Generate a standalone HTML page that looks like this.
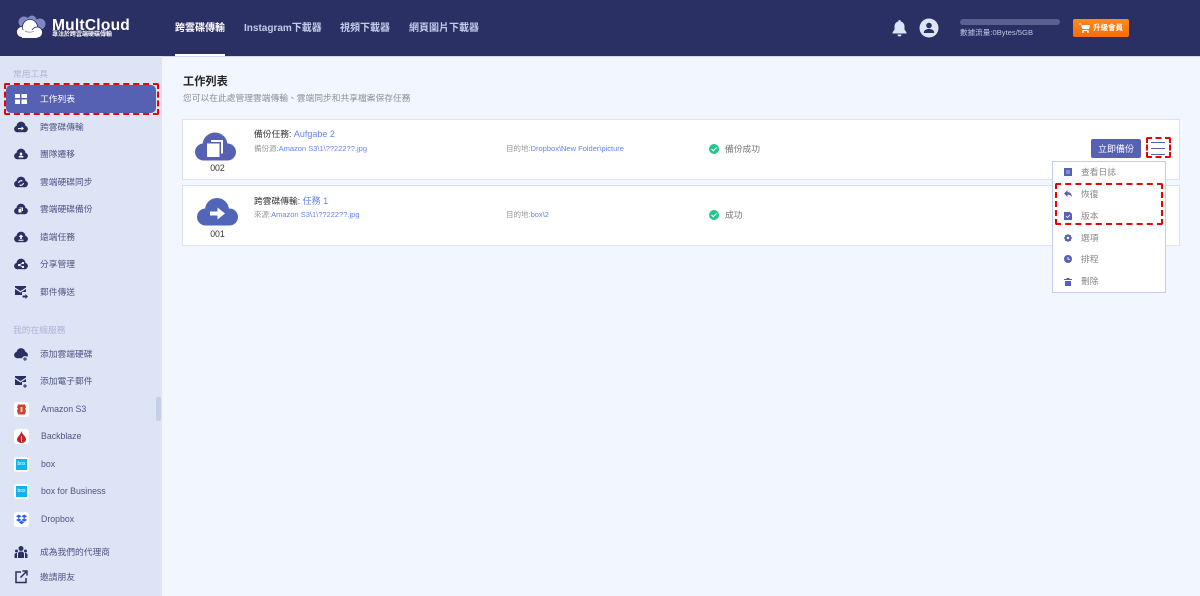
<!DOCTYPE html>
<html><head><meta charset="utf-8">
<style>
*{box-sizing:border-box}
html,body{margin:0;padding:0;width:1200px;height:596px;overflow:hidden;background:#f2f6fe;font-family:"Liberation Sans","Noto Sans CJK TC",sans-serif}
.a{position:absolute;white-space:nowrap}
#hd{position:absolute;left:0;top:0;width:1200px;height:56px;background:#2b3064}
#sb{position:absolute;left:0;top:56px;width:162px;height:540px;background:#dde4f5}
.nav{top:22px;font-size:10px;line-height:14px;color:#c3cbe9;font-weight:bold}
.it{left:40px;font-size:8.75px;line-height:12px;color:#4f5583}
.ic{position:absolute;left:14px;width:14px;height:14px}
.logo{position:absolute;left:14px;width:15px;height:15px;background:#fff;border-radius:3px}
.card{position:absolute;left:182px;width:998px;height:61px;background:#fff;border:1px solid #dbe3f3}
.t{font-size:8.75px;line-height:12px;color:#333}
.t .b{font-size:9px}
.s{font-size:7.5px;line-height:10px;color:#999}
.b{color:#6484f2}
.m{position:absolute;left:1081px;font-size:8.75px;line-height:12px;color:#888}
.mi{position:absolute;left:1064px;width:8px;height:8px}
.dash{position:absolute;border:2px dashed #f00000;border-radius:2px}
</style></head><body>
<div id="hd"></div>
<div style="position:absolute;left:0;top:56px;width:1200px;height:1px;background:#cfd7ef"></div>
<div id="sb"></div>

<svg class="a" style="left:15px;top:15px" width="32" height="25" viewBox="0 0 32 25">
<circle cx="9" cy="7" r="5.500" fill="#7f88c4"/><circle cx="17" cy="5" r="4.500" fill="#7f88c4"/><circle cx="25" cy="9" r="5.500" fill="#7f88c4"/>
<g fill="#fff" stroke="#2b3064" stroke-width=".8"><circle cx="7" cy="17" r="5.500"/><circle cx="15" cy="12" r="7.500"/><circle cx="22" cy="17.500" r="5.500"/></g>
<path d="M7 15h15v8H7z" fill="#fff"/>
<path d="M10 16q5 2.500 9 0" stroke="#9aa0c8" stroke-width="1" fill="none"/>
</svg>
<div class="a" style="left:52px;top:17px;font-size:15.500px;line-height:18px;font-weight:bold;color:#fff;letter-spacing:.25px">MultCloud</div>
<div class="a" style="left:52px;top:32px;font-size:6px;line-height:7px;color:#fff;font-weight:bold">專注於跨雲端硬碟傳輸</div>

<div class="a nav" style="left:175px;color:#fff">跨雲碟傳輸</div>
<div class="a" style="left:175px;top:54px;width:50px;height:2px;background:#fff"></div>
<div class="a nav" style="left:244px">Instagram下載器</div>
<div class="a nav" style="left:340px">視頻下載器</div>
<div class="a nav" style="left:409px">網頁圖片下載器</div>

<svg class="a" style="left:892px;top:20px" width="15" height="17" viewBox="0 0 15 17"><path d="M7.500 0a1.300 1.300 0 0 1 1.300 1.500c2.500.6 3.700 2.700 3.700 5v3l2 3v1H.5v-1l2-3v-3c0-2.300 1.200-4.400 3.700-5A1.300 1.300 0 0 1 7.500 0zM5.500 14.500h4a2 2 0 0 1-4 0z" fill="#dde4f5"/></svg>
<svg class="a" style="left:919px;top:18px" width="20" height="20" viewBox="0 0 20 20"><circle cx="10" cy="10" r="9.500" fill="#dde4f5"/><circle cx="10" cy="7.500" r="2.800" fill="#2b3064"/><path d="M4.800 15c0-3 2.500-4 5.200-4s5.200 1 5.200 4z" fill="#2b3064"/></svg>
<div class="a" style="left:960px;top:19px;width:100px;height:6px;border-radius:3px;background:#5b6090"></div>
<div class="a" style="left:960px;top:27px;font-size:7.600px;line-height:11px;color:#bcc5e4">數據流量:0Bytes/5GB</div>
<div class="a" style="left:1073px;top:19px;width:56px;height:18px;border-radius:2px;background:linear-gradient(#ff8a1e,#f56d0a);color:#fff;font-size:7.500px;line-height:18px;font-weight:bold;padding-left:20px">升級會員</div>
<svg class="a" style="left:1079px;top:23px" width="11" height="10" viewBox="0 0 11 10"><path d="M0 .5h2l.5 1.500H11L9.800 6H3.300L2 1.500H0zM3.500 7h6v1h-6z" fill="#fff"/><circle cx="4" cy="9" r="1" fill="#fff"/><circle cx="9" cy="9" r="1" fill="#fff"/></svg>

<!-- sidebar -->
<div class="a" style="left:13px;top:68px;font-size:8.750px;line-height:12px;color:#adb5dc">常用工具</div>
<div class="a" style="left:6px;top:85px;width:150px;height:28px;background:#5661b3;border-radius:5px"></div>
<div class="dash" style="left:4px;top:83px;width:155px;height:32px"></div>
<svg class="a" style="left:15px;top:94px" width="12" height="10"><path d="M0 0h5v4H0zM6.500 0H12v4H6.500zM0 5.500h5V10H0zM6.500 5.500H12V10H6.500z" fill="#fff"/></svg>
<div class="a it" style="top:93px;color:#fff">工作列表</div>

<svg width="0" height="0" style="position:absolute"><defs><symbol id="cl" viewBox="0 0 14 12"><g fill="#2b3064"><circle cx="3.300" cy="8" r="3.200"/><circle cx="7" cy="5" r="4.400"/><circle cx="10.700" cy="8" r="3.200"/><rect x="3" y="6" width="8" height="5.200"/></g></symbol></defs></svg>

<svg class="ic" style="top:120px" viewBox="0 0 14 12"><use href="#cl"/><path d="M4 7.500h3.500V6l2.500 2-2.500 2V8.600H4z" fill="#fff" transform="translate(0 -.5)"/></svg>
<div class="a it" style="top:121px">跨雲碟傳輸</div>
<svg class="ic" style="top:147px" viewBox="0 0 14 12"><use href="#cl"/><circle cx="7" cy="5.800" r="1.300" fill="#fff"/><path d="M4.500 9.500c0-1.500 1-2 2.500-2s2.500.5 2.500 2z" fill="#fff"/></svg>
<div class="a it" style="top:148px">團隊遷移</div>
<svg class="ic" style="top:175px" viewBox="0 0 14 12"><use href="#cl"/><circle cx="7" cy="7" r="2.300" fill="none" stroke="#fff" stroke-width="1.100" stroke-dasharray="5 2"/></svg>
<div class="a it" style="top:176px">雲端硬碟同步</div>
<svg class="ic" style="top:202px" viewBox="0 0 14 12"><use href="#cl"/><path d="M5.500 4.500h3.500V8H8V5.500H5.500zM4.500 6H7.500V9.500H4.500z" fill="#fff"/></svg>
<div class="a it" style="top:203px">雲端硬碟備份</div>
<svg class="ic" style="top:230px" viewBox="0 0 14 12"><use href="#cl"/><path d="M7 3.500l2.300 2.500H7.800V8H6.200V6H4.700zM4.500 8.800h5v1h-5z" fill="#fff"/></svg>
<div class="a it" style="top:231px">遠端任務</div>
<svg class="ic" style="top:257px" viewBox="0 0 14 12"><use href="#cl"/><circle cx="5" cy="7" r="1.100" fill="#fff"/><circle cx="9" cy="5" r="1.100" fill="#fff"/><circle cx="9" cy="9" r="1.100" fill="#fff"/><path d="M5 7l4-2M5 7l4 2" stroke="#fff" stroke-width=".7"/></svg>
<div class="a it" style="top:258px">分享管理</div>
<svg class="ic" style="top:285px" viewBox="0 0 14 14"><path d="M1 1h11v1.500L6.500 6 1 2.500zM1 4l5.500 3.500L12 4v3H8v3H1z" fill="#2b3064"/><path d="M8.500 10.500h3V9l2.500 2.500L11.500 14v-1.500h-3z" fill="#2b3064"/></svg>
<div class="a it" style="top:286px">郵件傳送</div>

<div class="a" style="left:13px;top:324px;font-size:8.750px;line-height:12px;color:#adb5dc">我的在線服務</div>
<svg class="ic" style="top:348px" viewBox="0 0 14 14"><g fill="#2b3064"><circle cx="3.300" cy="7" r="3.200"/><circle cx="7" cy="4.500" r="4.400"/><circle cx="10.700" cy="7" r="3.200"/><rect x="3" y="5" width="8" height="5.200"/></g><circle cx="11" cy="11" r="3" fill="#dde4f5"/><path d="M10.500 9h1v1.500H13v1h-1.500V13h-1v-1.500H9v-1h1.500z" fill="#2b3064"/></svg>
<div class="a it" style="top:348px">添加雲端硬碟</div>
<svg class="ic" style="top:375px" viewBox="0 0 14 14"><path d="M1 1h11v1.500L6.500 6 1 2.500zM1 4l5.500 3.500L12 4v3H8v3H1z" fill="#2b3064"/><path d="M10.500 9h1v1.500H13v1h-1.500V13h-1v-1.500H9v-1h1.500z" fill="#2b3064"/></svg>
<div class="a it" style="top:375px">添加電子郵件</div>

<div class="logo" style="top:402px"></div>
<svg class="a" style="left:16px;top:403px" width="11" height="13" viewBox="0 0 11 13"><path d="M2 1.500h7l1 3-1 1 1 2-1 4H2l-1-4 1-2-1-1z" fill="#c8452f"/><rect x="4.500" y="4" width="2" height="5" fill="#fff" opacity=".7"/></svg>
<div class="a it" style="left:41px;top:403px">Amazon S3</div>
<div class="logo" style="top:429px"></div>
<svg class="a" style="left:17px;top:431px" width="9" height="12" viewBox="0 0 9 12"><path d="M4.500 0c.5 2 1 2.500 2 3.800C8 5.500 9 7 9 8.500 9 10.500 7 12 4.500 12S0 10.500 0 8.500C0 6.500 1.500 5.500 2.500 4 3.500 3 4 1.500 4.500 0z" fill="#c0272d"/><path d="M4.500 5v6" stroke="#fff" stroke-width=".6"/></svg>
<div class="a it" style="left:41px;top:430px">Backblaze</div>
<div class="logo" style="top:457px"></div>
<div class="a" style="left:16px;top:459px;width:11px;height:11px;background:#0eb4f1;color:#fff;font-size:5px;line-height:11px;text-align:center">box</div>
<div class="a it" style="left:41px;top:458px">box</div>
<div class="logo" style="top:484px"></div>
<div class="a" style="left:16px;top:486px;width:11px;height:11px;background:#0eb4f1;color:#fff;font-size:5px;line-height:11px;text-align:center">box</div>
<div class="a it" style="left:41px;top:485px">box for Business</div>
<div class="logo" style="top:512px"></div>
<svg class="a" style="left:16px;top:514px" width="11" height="11" viewBox="0 0 12 11"><path d="M3 0l3 2-3 2-3-2zM9 0l3 2-3 2-3-2zM3 4l3 2-3 2-3-2zM9 4l3 2-3 2-3-2zM3 8.700l3-2 3 2-3 2z" fill="#2a62f0"/></svg>
<div class="a it" style="left:41px;top:513px">Dropbox</div>

<svg class="ic" style="top:545px" viewBox="0 0 14 14"><circle cx="7" cy="3.500" r="2.500" fill="#2b3064"/><circle cx="2.500" cy="6" r="1.500" fill="#2b3064"/><circle cx="11.500" cy="6" r="1.500" fill="#2b3064"/><path d="M4 13V9c0-2 1.500-2.500 3-2.500s3 .5 3 2.500v4zM.5 13v-3c0-1.500 1-2 2.500-2v5zM13.500 13v-3c0-1.500-1-2-2.500-2v5z" fill="#2b3064"/></svg>
<div class="a it" style="top:546px">成為我們的代理商</div>
<svg class="ic" style="top:570px" viewBox="0 0 14 14"><path d="M7 2H2v10.500h10V8" fill="none" stroke="#2b3064" stroke-width="1.500"/><path d="M8.500 1H13v4.500M13 1L6.500 7.500" fill="none" stroke="#2b3064" stroke-width="1.500"/></svg>
<div class="a it" style="top:571px">邀請朋友</div>

<div class="a" style="left:156px;top:397px;width:5px;height:24px;border-radius:2px;background:#c5cfe8"></div>

<!-- main -->
<div class="a" style="left:183px;top:75px;font-size:11.200px;line-height:15px;font-weight:bold;color:#222">工作列表</div>
<div class="a" style="left:183px;top:92px;font-size:8.750px;line-height:12px;color:#8a8f9c">您可以在此處管理雲端傳輸、雲端同步和共享檔案保存任務</div>

<div class="card" style="top:119px"></div>
<div class="card" style="top:185px"></div>

<svg class="a" style="left:195px;top:132px" width="41" height="29" viewBox="0 0 41 29"><g fill="#5661b3"><circle cx="8.500" cy="20" r="8.500"/><circle cx="20" cy="13" r="12.500"/><circle cx="32.500" cy="20" r="8.500"/><rect x="8" y="15" width="25" height="13.500"/></g><path d="M16 8h12v13.500h-2V10H16z" fill="#fff"/><path d="M12 11.500h12.500V25H12z" fill="#fff"/></svg>
<div class="a" style="left:195px;top:162px;width:45px;text-align:center;font-size:8.750px;line-height:12px;color:#333">002</div>
<div class="a t" style="left:254px;top:128px">備份任務: <span class="b">Aufgabe 2</span></div>
<div class="a s" style="left:254px;top:144px">備份源:<span class="b">Amazon S3\1\??222??.jpg</span></div>
<div class="a s" style="left:506px;top:144px">目的地:<span class="b">Dropbox\New Folder\picture</span></div>
<svg class="a" style="left:709px;top:144px" width="10" height="10" viewBox="0 0 10 10"><circle cx="5" cy="5" r="5" fill="#22c58b"/><path d="M2.500 5l1.800 1.800L7.600 3.500" stroke="#fff" stroke-width="1.100" fill="none"/></svg>
<div class="a" style="left:725px;top:143px;font-size:8.750px;line-height:12px;color:#777">備份成功</div>

<svg class="a" style="left:197px;top:198px" width="41" height="29" viewBox="0 0 41 29"><g fill="#5166b8"><circle cx="8.500" cy="19" r="8.500"/><circle cx="20" cy="12" r="12"/><circle cx="32.500" cy="19" r="8.500"/><rect x="8" y="14" width="25" height="13.500"/></g><path d="M13 13.500h7.500V9.500l7.500 6-7.500 6v-4H13z" fill="#fff"/></svg>
<div class="a" style="left:195px;top:228px;width:45px;text-align:center;font-size:8.750px;line-height:12px;color:#333">001</div>
<div class="a t" style="left:254px;top:195px">跨雲碟傳輸: <span class="b">任務 1</span></div>
<div class="a s" style="left:254px;top:210px">來源:<span class="b">Amazon S3\1\??222??.jpg</span></div>
<div class="a s" style="left:506px;top:210px">目的地:<span class="b">box\2</span></div>
<svg class="a" style="left:709px;top:210px" width="10" height="10" viewBox="0 0 10 10"><circle cx="5" cy="5" r="5" fill="#22c58b"/><path d="M2.500 5l1.800 1.800L7.600 3.500" stroke="#fff" stroke-width="1.100" fill="none"/></svg>
<div class="a" style="left:725px;top:209px;font-size:8.750px;line-height:12px;color:#777">成功</div>

<div class="a" style="left:1091px;top:139px;width:50px;height:19px;background:#5661b3;border-radius:2px;color:#fff;font-size:9px;line-height:21px;text-align:center">立即備份</div>
<div class="a" style="left:1151px;top:142px;width:14px;height:1px;background:#5661b3"></div>
<div class="a" style="left:1151px;top:148px;width:14px;height:1px;background:#5661b3"></div>
<div class="a" style="left:1151px;top:154px;width:14px;height:1px;background:#5661b3"></div>
<div class="dash" style="left:1146px;top:137px;width:25px;height:21px"></div>

<div class="a" style="left:1052px;top:161px;width:114px;height:132px;background:#fff;border:1px solid #c4cdee"></div>
<svg class="mi" style="top:168px" viewBox="0 0 8 8"><path d="M0 0h8v8H0z" fill="#5661b3"/><path d="M2 3h4M2 5h4" stroke="#d5d9f0" stroke-width=".8"/></svg>
<div class="m" style="top:166px">查看日誌</div>
<svg class="mi" style="top:190px" viewBox="0 0 8 8"><path d="M0 3.500L3.500 0v2C6 2 8 4 8 7 7 5.500 6 4.800 3.500 4.800V7z" fill="#5661b3"/></svg>
<div class="m" style="top:188px">恢復</div>
<svg class="mi" style="top:212px" viewBox="0 0 8 8"><path d="M0 0h6l2 2v6H0z" fill="#5661b3"/><path d="M2 4l1.500 1.500L6 3" stroke="#fff" stroke-width=".8" fill="none"/></svg>
<div class="m" style="top:210px">版本</div>
<svg class="mi" style="top:234px" viewBox="0 0 8 8"><circle cx="4" cy="4" r="2.500" fill="none" stroke="#5661b3" stroke-width="2"/><path d="M4 0v8M0 4h8M1.200 1.200l5.600 5.600M6.800 1.200L1.200 6.800" stroke="#5661b3" stroke-width=".9"/><circle cx="4" cy="4" r="1.200" fill="#fff"/></svg>
<div class="m" style="top:232px">選項</div>
<svg class="mi" style="top:255px" viewBox="0 0 8 8"><circle cx="4" cy="4" r="4" fill="#5661b3"/><path d="M4 2v2.300h2" stroke="#fff" stroke-width=".8" fill="none"/></svg>
<div class="m" style="top:253px">排程</div>
<svg class="mi" style="top:278px" viewBox="0 0 8 8"><path d="M2.500 0h3v1H8v1H0V1h2.500zM1 3h6v5H1z" fill="#5661b3"/></svg>
<div class="m" style="top:275px">刪除</div>
<div class="dash" style="left:1055px;top:183px;width:108px;height:42px"></div>
</body></html>
